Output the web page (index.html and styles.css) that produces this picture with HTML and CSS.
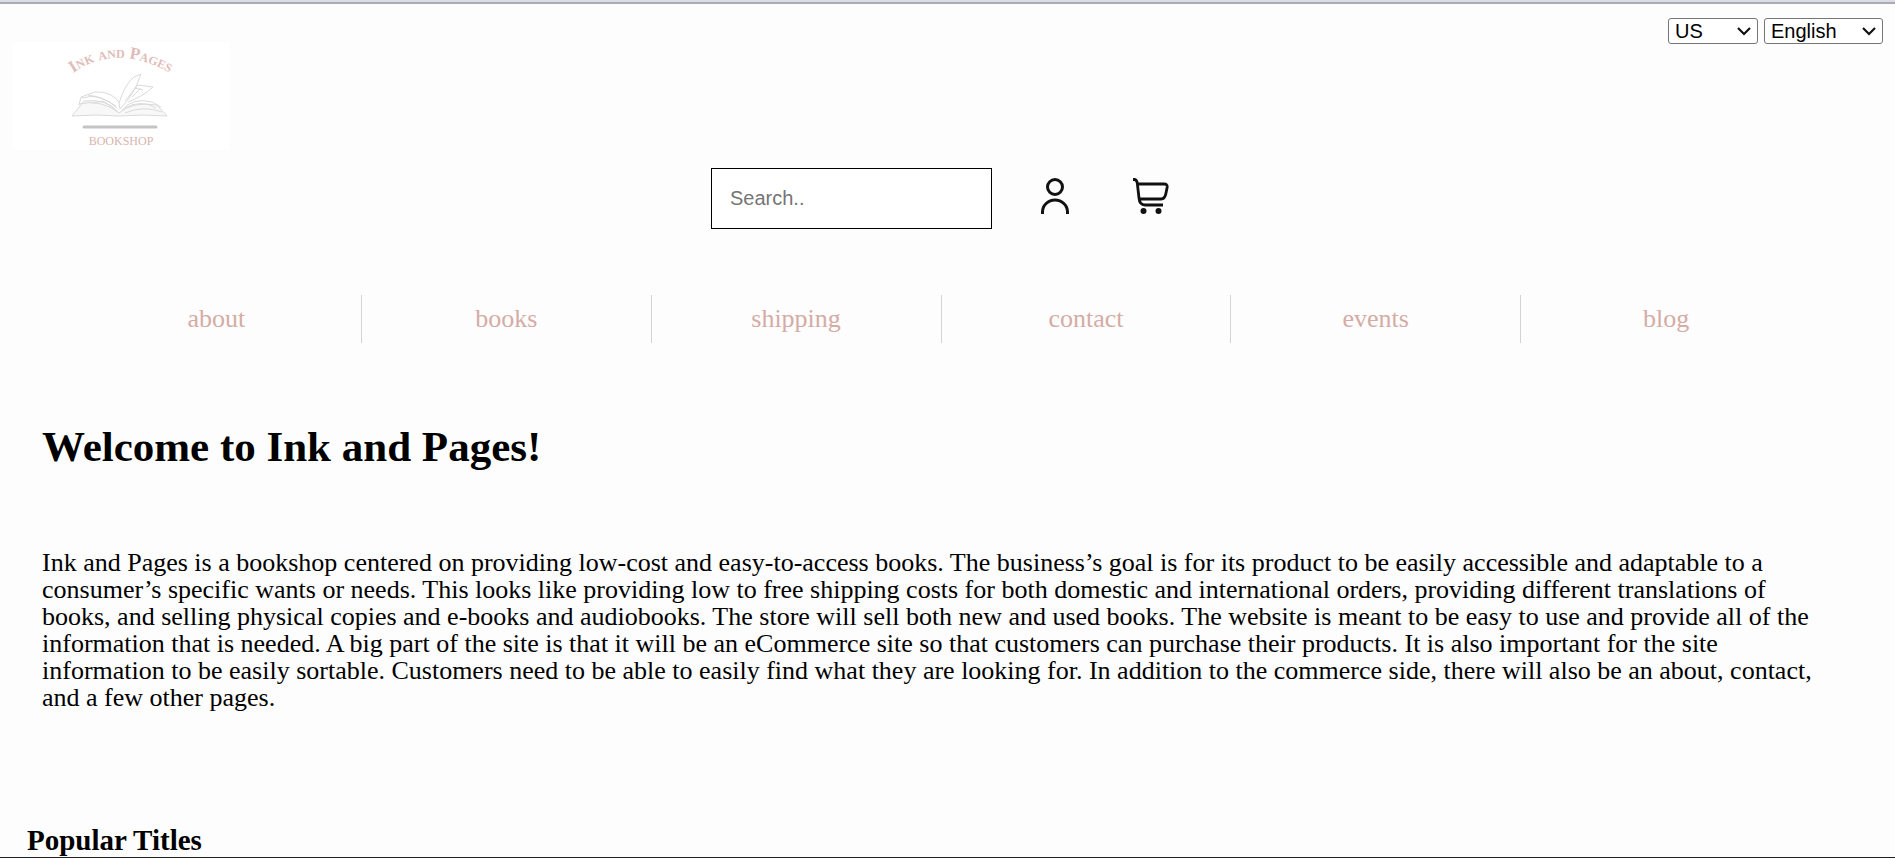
FILE: index.html
```html
<!DOCTYPE html>
<html lang="en">
<head>
<meta charset="utf-8">
<meta name="viewport" content="width=device-width, initial-scale=1">
<title>Ink and Pages</title>
<link rel="stylesheet" href="styles.css">
</head>
<body>
<header class="header">
  <div class="topbar">
    <a class="logo" href="#" aria-label="Ink and Pages Bookshop">
      <svg class="logo-art" viewBox="0 0 218 106" width="218" height="106">
        <defs><path id="arc" d="M61 30 Q108 -3 168 36"/></defs>
        <text class="logo-name"><textPath href="#arc">Ink and Pages</textPath></text>
        <g fill="none" stroke="#dadada" stroke-width="1" stroke-linejoin="round">
          <path d="M60 73 L72 58 Q95 55 107 70 Q120 58 145 62 L155 73 Q130 71 107 73 Q85 71 60 73 Z" fill="#f8f8f8"/>
          <path d="M67 62 L69 54 L83 49 Q101 48 108 61"/>
          <path d="M67 61 Q88 56 106 69 M70 55 Q88 49 105 65 M76 52 Q91 54 104 63 M80 60 L91 58 L102 65"/>
          <path d="M107 60 Q113 41 122 34 L129 31 Q122 52 108 66 Z" fill="#fff"/>
          <path d="M113 58 L126 42 L141 44 Q130 54 116 59 M120 54 L129 45 M123 45 L131 47"/>
          <path d="M110 67 Q121 54 140 59 L149 64 M113 65 Q129 56 144 65 M113 70 Q131 62 150 69"/>
        </g>
        <path d="M72 84H144" stroke="#c4c4c4" stroke-width="3" stroke-linecap="round"/>
        <text class="logo-sub" x="109" y="102" text-anchor="middle">BOOKSHOP</text>
      </svg>
    </a>
    <div class="locale">
      <select class="select country" aria-label="Country"><option>US</option></select>
      <select class="select language" aria-label="Language"><option>English</option></select>
    </div>
  </div>
  <div class="tools">
    <input class="search" type="text" placeholder="Search.." aria-label="Search">
    <a class="tool" href="#" aria-label="Account">
      <svg viewBox="0 0 36 36" width="36" height="36" fill="none" stroke="#111" stroke-width="3">
        <circle cx="18" cy="9" r="7.500"/><path d="M5.500 36V34A12.500 12 0 0 1 30.500 34V36"/>
      </svg>
    </a>
    <a class="tool" href="#" aria-label="Cart">
      <svg viewBox="0 0 36 36" width="36" height="36" fill="none" stroke="#111" stroke-width="2.800">
        <path d="M0 1.500H1Q4 1.500 4.400 6L6 20Q6.500 27 12 27H30M5 6H31Q34.500 6 34.200 9L33 15Q32 21 28 21H7"/>
        <circle cx="10.500" cy="33" r="3" fill="#111" stroke="none"/><circle cx="25.500" cy="33" r="3" fill="#111" stroke="none"/>
      </svg>
    </a>
  </div>
  <nav class="nav">
    <a href="#">about</a><a href="#">books</a><a href="#">shipping</a><a href="#">contact</a><a href="#">events</a><a href="#">blog</a>
  </nav>
</header>
<main>
  <section class="intro">
    <h1>Welcome to Ink and Pages!</h1>
    <p>Ink and Pages is a bookshop centered on providing low-cost and easy-to-access books. The business’s goal is for its product to be easily accessible and adaptable to a consumer’s specific wants or needs. This looks like providing low to free shipping costs for both domestic and international orders, providing different translations of books, and selling physical copies and e-books and audiobooks. The store will sell both new and used books. The website is meant to be easy to use and provide all of the information that is needed. A big part of the site is that it will be an eCommerce site so that customers can purchase their products. It is also important for the site information to be easily sortable. Customers need to be able to easily find what they are looking for. In addition to the commerce side, there will also be an about, contact, and a few other pages.</p>
  </section>
  <h2 class="popular">Popular Titles</h2>
</main>
</body>
</html>
```
FILE: styles.css
```css
* { box-sizing: border-box; }
body {
  margin: 0;
  min-height: 100vh;
  background: #fdfdfd;
  color: #000;
  font-family: Georgia, "Liberation Serif", serif;
  border-bottom: 1px solid #222;
}
.header { border-top: 2px solid #dcdce6; }
.topbar {
  display: flex;
  justify-content: space-between;
  align-items: flex-start;
  padding: 14px 12px 0;
  border-top: 2px solid #a9abb2;
}
.logo { display: block; margin-top: 25px; background: #fff; }
.logo-art { display: block; }
.logo-name { font-size: 17px; font-weight: bold; font-variant: small-caps; fill: #dfbcb7; }
.logo-sub { font-size: 12px; fill: #d9b4ae; }
.locale { display: flex; gap: 6px; }
.select {
  appearance: none;
  height: 26px;
  padding: 0 24px 0 6px;
  font: 20px "Liberation Sans", Arial, sans-serif;
  line-height: 24px;
  color: #000;
  background: #fff url("data:image/svg+xml,%3Csvg xmlns='http://www.w3.org/2000/svg' width='14' height='10' fill='none' stroke='%23111' stroke-width='2.2'%3E%3Cpath d='M1 2l6 6 6-6'/%3E%3C/svg%3E") no-repeat right 6px center;
  border: 1px solid #767676;
  border-radius: 3px;
}
.country { width: 90px; }
.language { width: 119px; }
.tools {
  display: flex;
  justify-content: center;
  align-items: center;
  padding: 19px 0 0;
  margin-right: 15px;
}
.search {
  width: 281px;
  height: 61px;
  padding: 0 18px;
  font: 20px "Liberation Sans", Arial, sans-serif;
  background: #fff;
  border: 1px solid #000;
}
.search::placeholder { color: #757575; }
.tool { display: block; margin: 0 0 6px 45px; }
.tool + .tool { margin-left: 60px; }
.tool svg { display: block; }
.nav {
  display: grid;
  grid-template-columns: repeat(6, 1fr);
  margin: 66px 84px 0 72px;
}
.nav a {
  padding: 10px 0 11px;
  font-size: 26px;
  line-height: 27px;
  text-align: center;
  color: #d4aca5;
  text-decoration: none;
  border-right: 1px solid #d3d3d3;
}
.nav a:last-child { border-right: 0; }
.intro { padding: 80px 64px 0 42px; }
h1 { margin: 0; font-size: 43px; line-height: 48px; }
p { margin: 78px 0 0; font-size: 26px; line-height: 27px; }
.popular { margin: 113px 27px 0; font-size: 29px; line-height: 32px; }
```
